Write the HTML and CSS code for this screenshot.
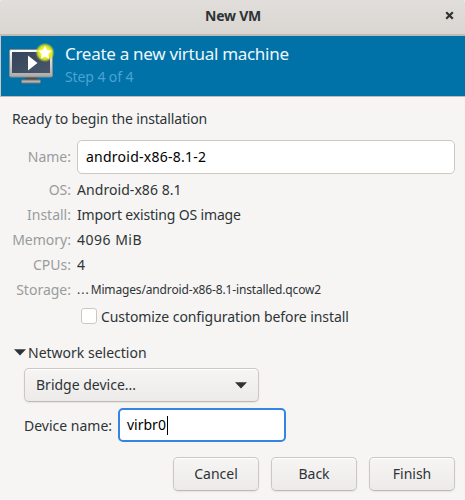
FILE: index.html
```html
<!DOCTYPE html>
<html lang="en">
<head>
<meta charset="utf-8">
<title>New VM</title>
<link rel="stylesheet" href="styles.css">
</head>
<body>
<div class="window">
  <header class="titlebar">
    <span></span>
    <h1><span class="t-title">New VM</span></h1>
    <svg class="close" width="9" height="9" viewBox="0 0 9 9"><path d="M1.200 1.200 7.800 7.800M7.800 1.200 1.200 7.800" stroke="#2e3436" stroke-width="2.200"/></svg>
  </header>
  <section class="banner">
    <svg class="monitor" width="48" height="44" viewBox="0 0 48 44">
      <defs>
        <linearGradient id="frame" x1="0" y1="0" x2="0" y2="1"><stop offset="0" stop-color="#fff"/><stop offset="1" stop-color="#a9a9a9"/></linearGradient>
        <linearGradient id="screen" x1="0" y1="0" x2="1" y2="1"><stop offset="0" stop-color="#34445a"/><stop offset="1" stop-color="#4a566a"/></linearGradient>
        <radialGradient id="glow"><stop offset="0" stop-color="#fffb60"/><stop offset=".5" stop-color="#f2f11a"/><stop offset=".72" stop-color="#dfe51e" stop-opacity=".9"/><stop offset="1" stop-color="#b4cf2c" stop-opacity="0"/></radialGradient>
      </defs>
      <path d="M17 34h11l1 4H16z" fill="#4c4c4c"/>
      <rect x="12.500" y="38" width="19" height="3" rx=".8" fill="#b5b5b5" stroke="#777"/>
      <rect x=".5" y="7.500" width="43" height="27.500" rx="1.500" fill="url(#frame)" stroke="#8c8c8c"/>
      <rect x="3" y="10" width="38" height="21" fill="url(#screen)"/>
      <path d="M19 13.500 28.500 21 19 28.500z" fill="#fff"/>
      <circle cx="36" cy="10.500" r="9.800" fill="url(#glow)"/>
      <path transform="translate(0 .5)" d="M36 3.300 38 7.600 42.700 8.200 39.300 11.500 40.100 16.200 36 13.900 31.900 16.200 32.700 11.500 29.300 8.200 34 7.600z" fill="#fff"/>
    </svg>
    <div class="banner-text">
      <div class="heading"><span class="t-heading">Create a new virtual machine</span></div>
      <div class="step"><span class="t-step">Step 4 of 4</span></div>
    </div>
  </section>
  <main>
    <p class="intro"><span class="t-intro">Ready to begin the installation</span></p>
    <div class="details">
      <label class="key tall"><span>Name:</span></label><div class="entry"><span class="t-vm">android-x86-8.1-2</span></div>
      <span class="key">OS:</span><span class="t-osv">Android-x86 8.1</span>
      <span class="key">Install:</span><span class="t-instv">Import existing OS image</span>
      <span class="key">Memory:</span><span class="t-memv">4096 MiB</span>
      <span class="key">CPUs:</span><span>4</span>
      <span class="key">Storage:</span><span class="path"><span class="t-dots">...</span><span class="t-path">Mimages/android-x86-8.1-installed.qcow2</span></span>
    </div>
    <label class="customize"><i class="box"></i><span class="t-cust">Customize configuration before install</span></label>
    <div class="expander"><svg width="12" height="7" viewBox="0 0 12 7"><path d="M0 .3h12L6 6.500z" fill="#2e3436"/></svg><span>Network selection</span></div>
    <div class="combo"><span>Bridge device...</span><svg width="12" height="7" viewBox="0 0 12 7"><path d="M0 .3h12L6 6.500z" fill="#2e3436"/></svg></div>
    <div class="device"><span>Device name:</span><div class="entry focus"><span class="t-virbr">virbr0</span><i class="caret"></i></div></div>
  </main>
  <footer>
    <div class="button">Cancel</div>
    <div class="button">Back</div>
    <div class="button">Finish</div>
  </footer>
</div>
</body>
</html>
```
FILE: styles.css
```css
* { box-sizing: border-box; }
body { margin: 0; width: 465px; height: 500px; overflow: hidden; background: #f6f5f4; color: #2e3436; font: 14px/25px "Noto Sans", "Open Sans", sans-serif; white-space: nowrap; }
.window { height: 500px; display: flex; flex-direction: column; }
h1, p { margin: 0; font-size: inherit; }
.titlebar { height: 36px; padding: 0 11px 4px 1px; display: grid; grid-template-columns: 20px 1fr 9px; align-items: center; text-align: center; background: linear-gradient(#e1dedb, #dad6d2); border-bottom: 2px solid #c1bbb5; border-radius: 2px 2px 0 0; }
.titlebar h1 { font-weight: 700; }
.close { display: block; }
.banner { height: 61px; display: flex; background: #0072a8; color: #eef7fb; border-left: 1px solid #cdc7c2; border-bottom: 1px solid #c1bbb5; padding: 6px 0 0 8px; }
.monitor { flex: none; }
.banner-text { margin-left: 8px; }
.heading { font-size: 17px; height: 24px; line-height: 24px; }
.step { color: #4ba3d3; line-height: 22px; }
main { padding: 10px 10px 0 12px; }
.intro { height: 33px; line-height: 24px; }
.details { display: grid; grid-template-columns: 59px 378px; column-gap: 6px; grid-template-rows: 37px repeat(5, 25px); }
.key { text-align: right; color: #999c9c; }
.tall { line-height: 34px; }
.entry { height: 34px; border: 1px solid #cdc7c2; border-radius: 5px; background: #fff; color: #000; padding-left: 8px; line-height: 32px; }
.path { font-size: 12px; display: flex; gap: 1px; }
.customize { display: flex; align-items: center; height: 24px; margin: 2px 0 0 69px; gap: 4px; }
.box { width: 16px; height: 16px; border: 1px solid #cdc7c2; border-radius: 3px; background: #fff; }
.expander { display: flex; align-items: center; gap: 2px; height: 24px; margin: 12px 0 4px 2px; }
.combo, .button { height: 34px; border: 1px solid #cdc7c2; border-bottom-color: #bfb8b1; border-radius: 5px; background: linear-gradient(#f6f5f4, #edebe9); box-shadow: inset 0 1px #fff, 0 1px 2px rgba(0,0,0,.07); line-height: 32px; }
.combo { width: 235px; margin-left: 12px; padding: 0 11px; display: flex; align-items: center; justify-content: space-between; }
.device { display: flex; align-items: center; gap: 6px; margin: 6px 0 0 12px; height: 34px; }
.device > span { width: 88px; }
.focus { width: 168px; border: 2px solid #3584e4; padding-left: 7px; line-height: 30px; display: flex; align-items: center; }
.caret { width: 1px; height: 19px; margin-left: 1px; background: #000; }
footer { display: flex; justify-content: flex-end; gap: 12px; padding: 0 10px; margin-top: 15px; }
.button { width: 86px; text-align: center; }
.t-title { letter-spacing: -.25px; }
.t-heading { letter-spacing: -.29px; }
.t-step { letter-spacing: -.1px; }
.t-intro { letter-spacing: -.16px; }
.t-vm { letter-spacing: .25px; }
.t-osv { letter-spacing: .06px; }
.t-instv { letter-spacing: -.16px; }
.t-memv { letter-spacing: .5px; }
.t-dots { letter-spacing: 1px; }
.t-path { letter-spacing: -.15px; }
.t-cust { letter-spacing: -.08px; }
```
